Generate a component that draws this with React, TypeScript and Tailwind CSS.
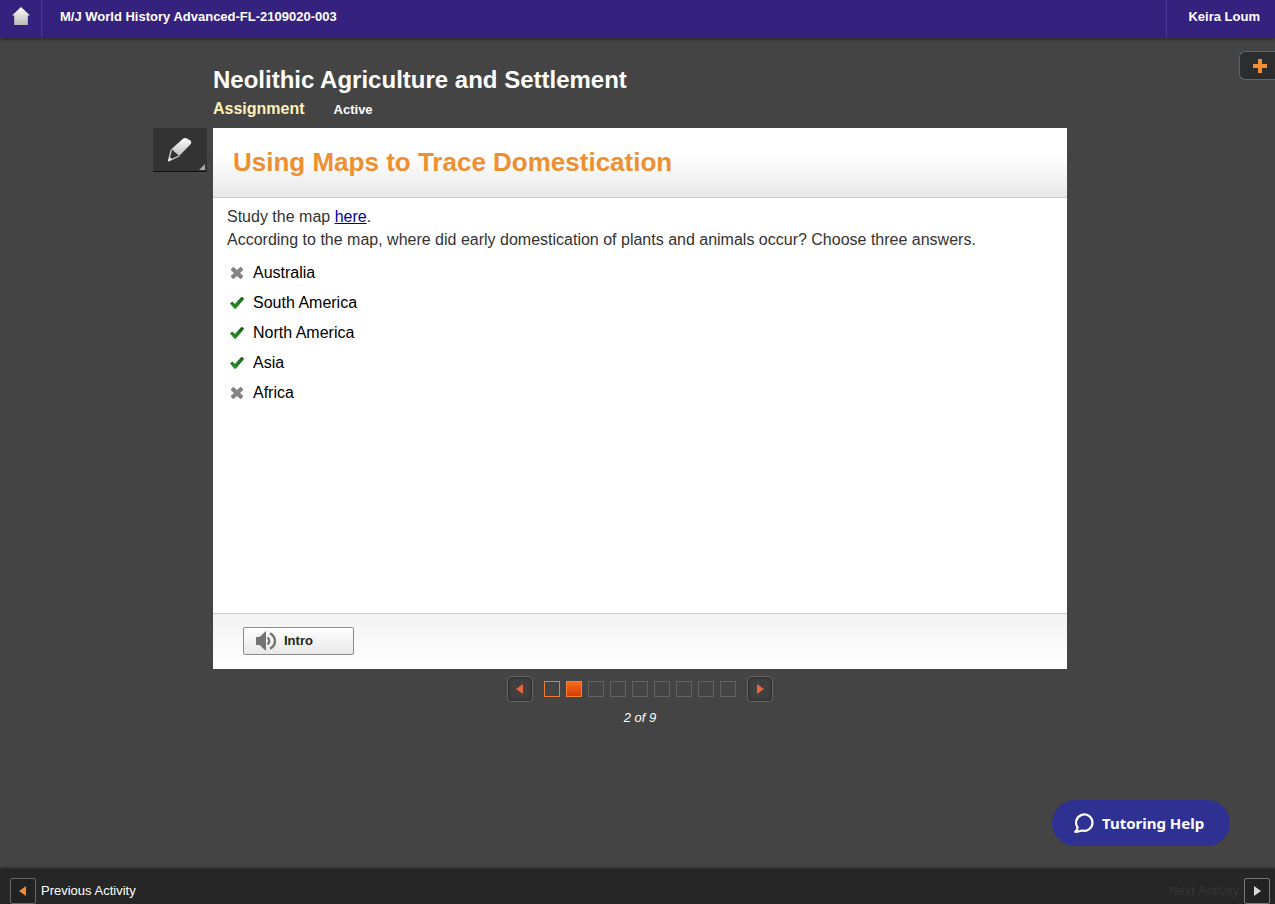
import React from "react";

const answers = [
  { label: "Australia", correct: false },
  { label: "South America", correct: true },
  { label: "North America", correct: true },
  { label: "Asia", correct: true },
  { label: "Africa", correct: false },
];

const frames = [
  "done",
  "current",
  "open",
  "open",
  "open",
  "open",
  "open",
  "open",
  "open",
] as const;

const HomeIcon = () => (
  <svg width="18" height="18" viewBox="0 0 18 18" aria-hidden="true">
    <defs>
      <linearGradient id="home" x1="0" y1="0" x2="0" y2="1">
        <stop offset="0" stopColor="#ffffff" />
        <stop offset="1" stopColor="#b9b9b9" />
      </linearGradient>
    </defs>
    <path d="M9 0 18 8.6h-2.2V18H2.2V8.6H0z" fill="url(#home)" />
  </svg>
);

const PlusIcon = () => (
  <svg width="14" height="14" viewBox="0 0 14 14" aria-hidden="true">
    <path d="M5 0h4v5h5v4H9v5H5V9H0V5h5z" fill="#f58f33" />
  </svg>
);

const PencilIcon = () => (
  <svg width="26" height="26" viewBox="0 0 26 26" aria-hidden="true">
    <defs>
      <linearGradient id="pencil" x1="0" y1="0" x2="0" y2="1">
        <stop offset="0" stopColor="#ffffff" />
        <stop offset="1" stopColor="#bdbdbd" />
      </linearGradient>
    </defs>
    <path
      d="M4.500 12 16 1.800q1.600-1.400 3.400-.6l3.800 2.400q1.700 1.300.8 3.200L12.200 19z"
      fill="url(#pencil)"
    />
    <path
      d="M4.400 12.500 1.500 23.800 12.200 19"
      fill="none"
      stroke="#d2d2d2"
      strokeWidth="1.300"
      strokeLinejoin="round"
    />
    <path d="M2.400 20 .8 24.600l4.600-2.200z" fill="#e4e4e4" />
  </svg>
);

const CheckIcon = () => (
  <svg width="14" height="14" viewBox="0 0 14 14" aria-hidden="true">
    <defs>
      <linearGradient id="check" x1="0" y1="0" x2="0" y2="1">
        <stop offset="0" stopColor="#175e17" />
        <stop offset="1" stopColor="#2c962c" />
      </linearGradient>
    </defs>
    <path
      d="M0 7.500 2.200 5.600 5 8.100 11 1.300q.8-.7 1.600 0l.9.8q.8.7.1 1.500L6.100 12.400q-1 .9-1.900 0z"
      fill="url(#check)"
    />
  </svg>
);

const CrossIcon = () => (
  <svg width="14" height="14" viewBox="0 0 14 14" aria-hidden="true">
    <path
      d="m1 3.6 2.4-2.3L7 4.6l3.6-3.3L13 3.6 9.5 7l3.5 3.4-2.4 2.3L7 9.4l-3.6 3.3L1 10.4 4.5 7z"
      fill="#858585"
      stroke="#686868"
      strokeWidth="0.8"
      strokeLinejoin="round"
    />
  </svg>
);

const SpeakerIcon = () => (
  <svg width="22" height="20" viewBox="0 0 22 20" aria-hidden="true">
    <path d="M1 6h3.500L11 0v20l-6.500-6H1z" fill="#737373" />
    <g fill="none" stroke="#737373">
      <path d="M12.500 6.500q3.600 3.500 0 7" strokeWidth="2.400" />
      <path d="M15 2.200q5 3 5 7.800t-5 7.800" strokeWidth="2.400" />
    </g>
  </svg>
);

const ChatIcon = () => (
  <svg width="20" height="20" viewBox="0 0 20 20" aria-hidden="true">
    <path
      d="M3.600 14.400A8.200 8.200 0 1 1 8 17.500C5.800 18 4 18.800 1.300 18.800c1.400-1.300 2.200-2.600 2.300-4.400z"
      fill="none"
      stroke="#ffffff"
      strokeWidth="2.200"
      strokeLinejoin="round"
    />
  </svg>
);

const Arrow = ({
  direction,
  color,
}: {
  direction: "left" | "right";
  color: string;
}) => (
  <svg width="8" height="10" viewBox="0 0 8 10" aria-hidden="true">
    <path
      d={direction === "left" ? "M7 0v10L0 5z" : "M1 0v10l7-5z"}
      fill={color}
    />
  </svg>
);

const FrameButton = ({ direction }: { direction: "left" | "right" }) => (
  <button
    type="button"
    aria-label={direction === "left" ? "Previous frame" : "Next frame"}
    className="flex size-[26px] items-center justify-center rounded border border-[#686868] bg-[#404040] shadow-[inset_0_0_3px_1px_#2c2c2c]"
  >
    <Arrow direction={direction} color="#e8653a" />
  </button>
);

const Frame = ({
  state,
  number,
}: {
  state: "done" | "current" | "open";
  number: number;
}) => {
  const label = `Frame ${number}`;

  switch (state) {
    case "done":
      return (
        <button
          type="button"
          aria-label={label}
          className="size-4 border border-[#ee7a31]"
        />
      );
    case "current":
      return (
        <button
          type="button"
          aria-label={label}
          aria-current="step"
          className="size-4 border border-[#f5803a] bg-linear-to-b from-[#f8691c] to-[#d23c00]"
        />
      );
  }

  return (
    <button
      type="button"
      aria-label={label}
      className="size-4 border border-[#626262]"
    />
  );
};

const Header = () => (
  <header className="flex h-[38px] items-stretch bg-[#35227f] text-[13px] font-bold text-white shadow-[0_1px_3px_#222222]">
    <a
      href="#home"
      aria-label="Home"
      className="flex w-[42px] justify-center border-r border-[#49389a] pt-[7px]"
    >
      <HomeIcon />
    </a>
    <div className="flex-1 truncate pt-2 pl-[18px] leading-[18px]">
      M/J World History Advanced-FL-2109020-003
    </div>
    <div className="border-l border-[#49389a] pt-2 pr-[15px] pl-[21px] leading-[18px]">
      Keira Loum
    </div>
  </header>
);

const Question = () => (
  <div className="min-h-[415px] px-[14px] pt-[7px]">
    <p className="text-base leading-[23px] text-[#333333]">
      Study the map{" "}
      <a href="#map" className="text-[#00009c] underline">
        here
      </a>
      .<br />
      According to the map, where did early domestication of plants and animals
      occur? Choose three answers.
    </p>
    <ul className="pt-[7px]">
      {answers.map((answer) => (
        <li
          key={answer.label}
          className="flex h-[30px] items-center gap-[9px] pl-[3px] text-base text-black"
        >
          {answer.correct ? <CheckIcon /> : <CrossIcon />}
          {answer.label}
        </li>
      ))}
    </ul>
  </div>
);

const Card = () => (
  <section className="bg-white">
    <div className="h-[70px] border-b border-[#cccccc] bg-linear-to-b from-white from-40% to-[#e8e8e8] px-5 pt-[18px]">
      <h2 className="text-[26px] leading-8 font-bold text-[#ec9032]">
        Using Maps to Trace Domestication
      </h2>
    </div>
    <Question />
    <div className="h-14 border-t border-[#cccccc] bg-linear-to-b from-[#f3f3f3] to-white px-[30px] pt-[13px]">
      <button
        type="button"
        className="flex h-7 w-[111px] items-center gap-[7px] rounded-xs border border-[#8c8c8c] bg-linear-to-b from-white to-[#e8e8e8] pl-[11px] text-[13px] font-bold text-[#222222]"
      >
        <SpeakerIcon />
        Intro
      </button>
    </div>
  </section>
);

export default function App() {
  return (
    <div className="relative flex min-h-screen flex-col bg-[#444444] font-['Liberation_Sans',Arial,sans-serif]">
      <Header />
      <button
        type="button"
        aria-label="Open panel"
        className="absolute top-[51px] right-0 flex h-[29px] w-9 items-center rounded-l-md border border-r-0 border-[#5f666b] bg-[#2b2d2f] pl-[13px]"
      >
        <PlusIcon />
      </button>

      <main className="flex flex-1 flex-col items-center pt-[26px] pl-[5px]">
        <div className="relative w-full max-w-[854px]">
          <h1 className="text-2xl leading-8 font-bold text-white">
            Neolithic Agriculture and Settlement
          </h1>
          <div className="mb-[6px] flex items-baseline gap-[29px] leading-[26px] font-bold">
            <span className="text-base leading-[26px] text-[#fff1b8]">
              Assignment
            </span>
            <span className="text-[13px] leading-4 text-white">Active</span>
          </div>
          <button
            type="button"
            aria-label="Highlighter"
            className="absolute top-16 -left-[60px] flex h-11 w-[54px] items-center justify-center border-b border-[#111111] bg-[#333333]"
          >
            <PencilIcon />
            <svg
              className="absolute right-[2px] bottom-[1px]"
              width="6"
              height="6"
              viewBox="0 0 6 6"
              aria-hidden="true"
            >
              <path d="M6 0v6H0z" fill="#a8a8a8" />
            </svg>
          </button>
          <Card />
        </div>

        <nav className="flex items-center gap-[11px] pt-[7px]">
          <FrameButton direction="left" />
          <div className="flex gap-[6px]">
            {frames.map((state, i) => (
              <Frame key={i} state={state} number={i + 1} />
            ))}
          </div>
          <FrameButton direction="right" />
        </nav>
        <p className="pt-[7px] text-[13px] leading-[18px] text-white italic">
          2 of 9
        </p>
      </main>

      <button
        type="button"
        className="absolute right-[45px] bottom-[58px] flex h-[46px] w-[178px] items-center gap-2 rounded-full bg-[#2e3192] pl-[22px] font-['Noto_Sans',sans-serif] text-[15px] font-bold text-white"
      >
        <ChatIcon />
        Tutoring Help
      </button>

      <footer className="flex h-[35px] items-end justify-between bg-[#262626] pr-[5px] pl-[10px] text-[13px] shadow-[0_-1px_3px_#222222]">
        <button type="button" className="flex items-center gap-[5px] text-white">
          <span className="flex size-[26px] items-center justify-center rounded-xs border border-[#666666] bg-[#222222]">
            <Arrow direction="left" color="#f08a35" />
          </span>
          Previous Activity
        </button>
        <button
          type="button"
          disabled
          className="flex items-center gap-[5px] text-[#353535]"
        >
          Next Activity
          <span className="flex size-[26px] items-center justify-center rounded-xs border border-[#777777] bg-[#222222]">
            <Arrow direction="right" color="#d8d8d8" />
          </span>
        </button>
      </footer>
    </div>
  );
}
